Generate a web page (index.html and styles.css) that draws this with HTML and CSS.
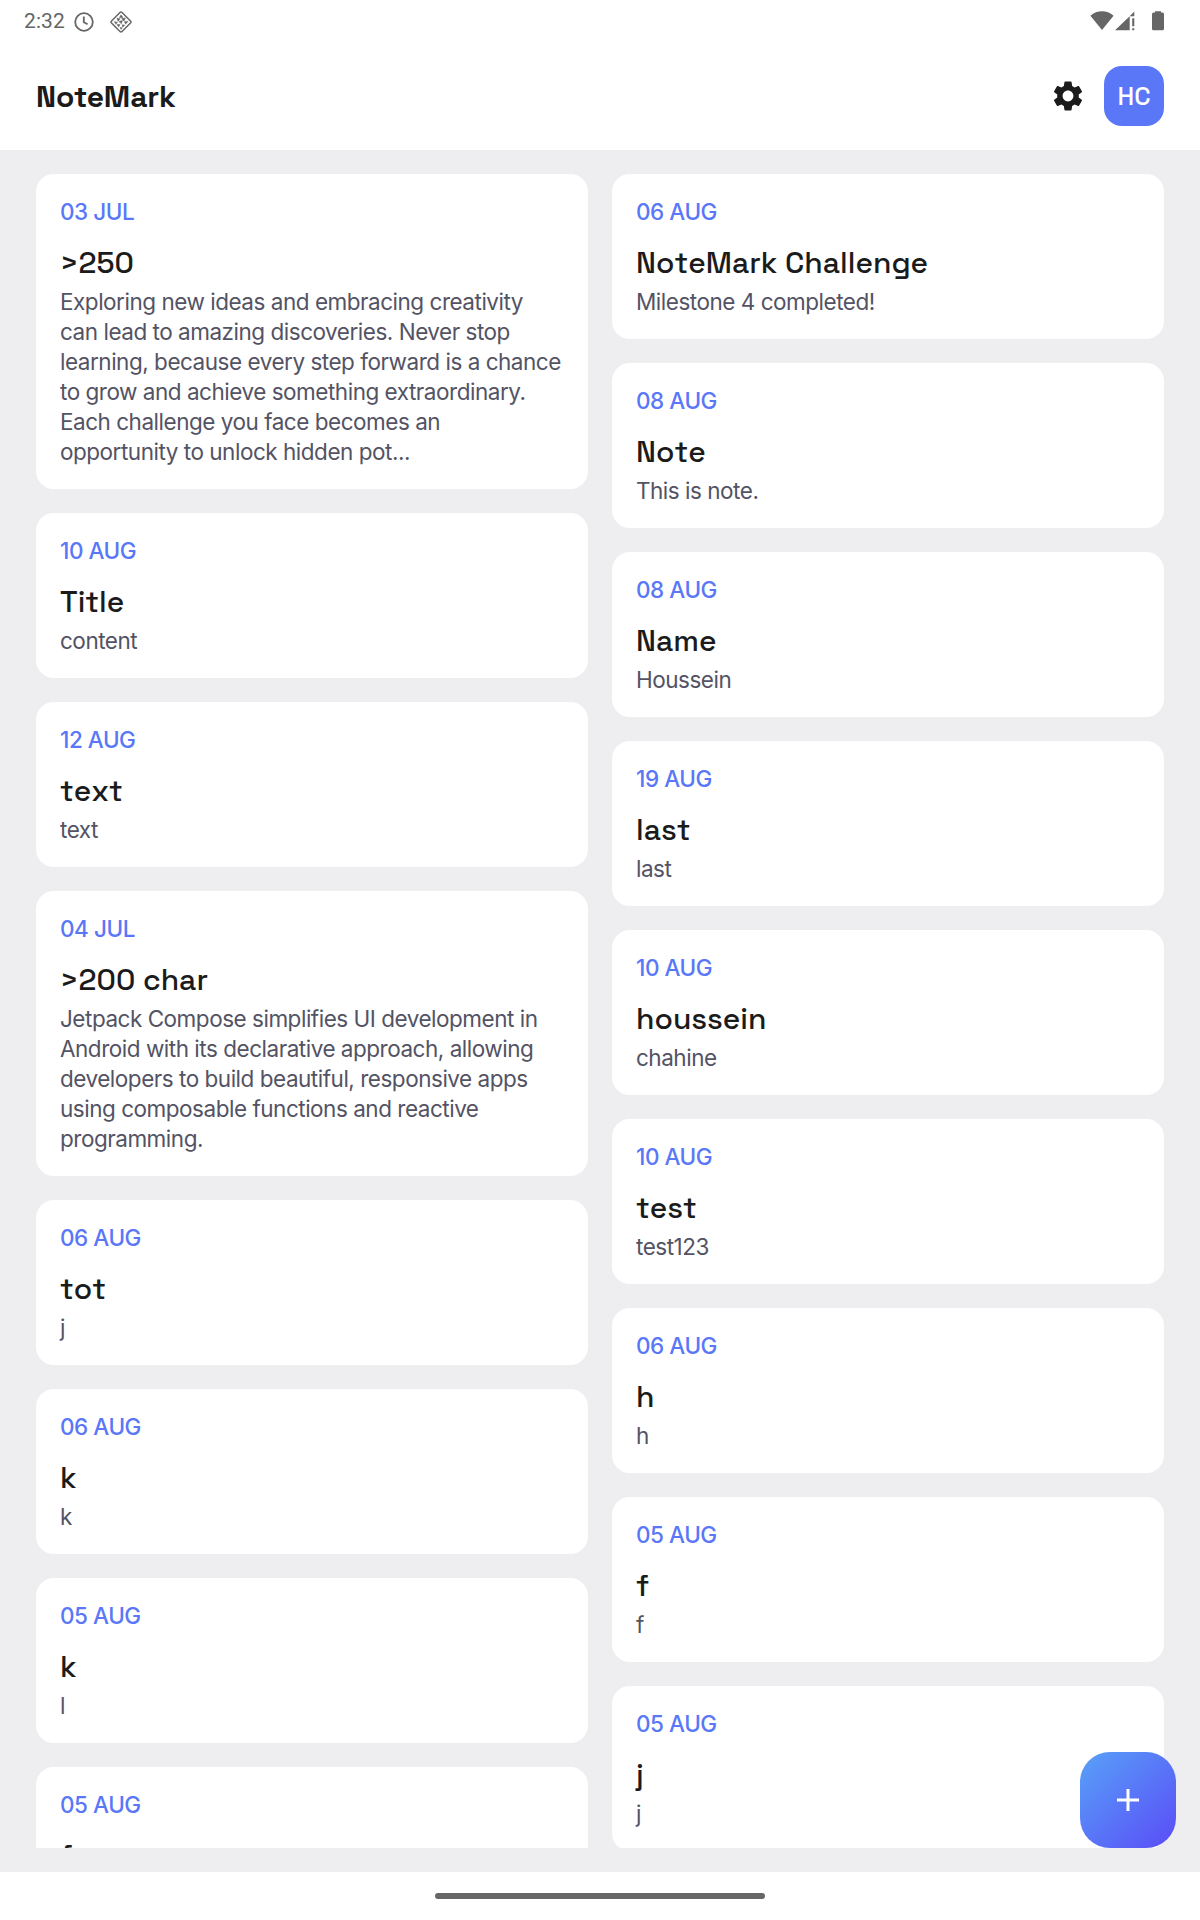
FILE: index.html
```html
<!DOCTYPE html>
<html lang="en">
<head>
<meta charset="utf-8">
<title>NoteMark</title>
<link rel="stylesheet" href="styles.css">
</head>
<body>
<div class="status-bar">
  <div class="status-group status-left">
    <span class="clock">2:32</span>
    <svg class="icon-clock" viewBox="0 0 20 20"><circle cx="10" cy="10" r="8.8"/><path d="M9.8 4.5V10.3L13.6 12.3"/></svg>
    <svg class="icon-diamond" viewBox="0 0 22 22"><path d="M10.2 1.3 1.3 10.2Q.7 11 1.3 11.8L10.2 20.7Q11 21.3 11.8 20.7L20.7 11.8Q21.3 11 20.7 10.2L11.8 1.3Q11 .7 10.2 1.3Z"/><path class="facets" d="M11 3.800 13 6.400 9.400 6.600zM7 7.200 10.200 7.800 8 10.400zM11.600 7.600 15.400 7 14 10.200zM4.400 10.600 7.400 11.400 5.800 13.200zM9 10.600 12.400 9.400 11.400 12.800zM14.600 10.600 18 10.400 15.400 13.200zM7 13.400 10 13.400 8.600 16zM12.200 13.800 14.800 14.200 12.600 16.200zM10 16.400 12.200 16.800 11 18.400z"/></svg>
  </div>
  <div class="status-group status-right">
    <svg class="icon-wifi" viewBox="0 0 24 20"><path d="M.4 4.700Q5.500.3 12 .3T23.600 4.700L12 19z"/></svg>
    <svg class="icon-signal" viewBox="0 0 20 20"><path d="M0 19.300 14.700 5.200V19.300zM19.300.5V5.200H14.700zM17.200 7.300H19.300V15.300H17.200zM17.200 17.200H19.300V19.300H17.200z"/></svg>
    <svg class="icon-battery" viewBox="0 0 12 20"><path d="M3 .3H9V1.500H10.500Q12 1.500 12 3V17.700Q12 19.200 10.500 19.200H1.500Q0 19.200 0 17.700V3Q0 1.500 1.500 1.500H3z"/></svg>
  </div>
</div>
<header class="app-bar">
  <h1 class="app-title">NoteMark</h1>
  <svg class="icon-settings" viewBox="0 0 24 24"><path d="M19.140 12.940c.04-.3.060-.61.060-.94 0-.32-.02-.64-.07-.94l2.030-1.580c.18-.14.230-.41.120-.61l-1.920-3.320c-.12-.22-.37-.29-.59-.22l-2.390.96c-.5-.38-1.030-.7-1.620-.94l-.36-2.540c-.04-.24-.24-.41-.48-.41h-3.840c-.24 0-.43.17-.47.41l-.36 2.540c-.59.24-1.130.57-1.620.94l-2.390-.96c-.22-.08-.47 0-.59.22L2.740 8.870c-.12.21-.08.47.120.61l2.030 1.580c-.05.3-.09.63-.09.94s.02.64.070.94l-2.030 1.580c-.18.14-.23.41-.12.61l1.920 3.320c.12.22.37.29.59.22l2.390-.96c.5.380 1.030.7 1.620.94l.36 2.540c.05.24.24.41.48.41h3.840c.24 0 .44-.17.470-.41l.36-2.540c.59-.24 1.130-.56 1.620-.94l2.390.96c.22.080.47 0 .59-.22l1.920-3.320c.12-.22.070-.47-.12-.61l-2.010-1.580zM12 15.600c-1.980 0-3.600-1.620-3.600-3.600s1.620-3.600 3.600-3.600 3.600 1.620 3.600 3.600-1.620 3.600-3.600 3.600z"/></svg>
  <div class="avatar">HC</div>
</header>
<main class="content">
  <div class="notes">
    <div class="column">
      <article class="note"><time>03 JUL</time><h2>&gt;250</h2><p>Exploring new ideas and embracing creativity can lead to amazing discoveries. Never stop learning, because every step forward is a chance to grow and achieve something extraordinary. Each challenge you face becomes an opportunity to unlock hidden pot...</p></article>
      <article class="note"><time>10 AUG</time><h2>Title</h2><p>content</p></article>
      <article class="note"><time>12 AUG</time><h2>text</h2><p>text</p></article>
      <article class="note"><time>04 JUL</time><h2>&gt;200 char</h2><p>Jetpack Compose simplifies UI development in Android with its declarative approach, allowing developers to build beautiful, responsive apps using composable functions and reactive programming.</p></article>
      <article class="note"><time>06 AUG</time><h2>tot</h2><p>j</p></article>
      <article class="note"><time>06 AUG</time><h2>k</h2><p>k</p></article>
      <article class="note"><time>05 AUG</time><h2>k</h2><p>l</p></article>
      <article class="note"><time>05 AUG</time><h2>f</h2></article>
    </div>
    <div class="column">
      <article class="note"><time>06 AUG</time><h2>NoteMark Challenge</h2><p>Milestone 4 completed!</p></article>
      <article class="note"><time>08 AUG</time><h2>Note</h2><p>This is note.</p></article>
      <article class="note"><time>08 AUG</time><h2>Name</h2><p>Houssein</p></article>
      <article class="note"><time>19 AUG</time><h2>last</h2><p>last</p></article>
      <article class="note"><time>10 AUG</time><h2>houssein</h2><p>chahine</p></article>
      <article class="note"><time>10 AUG</time><h2>test</h2><p>test123</p></article>
      <article class="note"><time>06 AUG</time><h2>h</h2><p>h</p></article>
      <article class="note"><time>05 AUG</time><h2>f</h2><p>f</p></article>
      <article class="note"><time>05 AUG</time><h2>j</h2><p>j</p></article>
    </div>
  </div>
  <button class="fab" aria-label="Add note"><svg viewBox="0 0 22 22"><path d="M11 0V22M0 11H22"/></svg></button>
</main>
<footer class="nav-bar"><div class="handle"></div></footer>
</body>
</html>
```
FILE: styles.css
```css
* { box-sizing: border-box; }
body {
  margin: 0;
  width: 1200px;
  height: 1920px;
  display: flex;
  flex-direction: column;
  overflow: hidden;
  background: #fff;
  font-family: Inter, sans-serif;
  color: #1b1b1c;
}
.status-bar {
  height: 42px;
  padding: 0 36px 0 24px;
  display: flex;
  justify-content: space-between;
  color: #666;
}
.status-group { display: flex; align-items: center; }
.status-group svg { fill: #666; }
.clock { font: 400 21px/42px Roboto, sans-serif; letter-spacing: .1px; }
.status-group .icon-clock { width: 20px; height: 20px; margin: 2px 0 0 9px; fill: none; stroke: #666; stroke-width: 1.8; }
.status-group .icon-diamond { width: 22px; height: 22px; margin: 2px 0 0 16px; fill: none; stroke: #666; stroke-width: 1.5; }
.facets { fill: #666; stroke-width: .5; }
.icon-wifi { width: 24px; height: 20px; }
.icon-signal { width: 20px; height: 20px; margin-left: 1px; }
.icon-battery { width: 12px; height: 20px; margin-left: 17px; }
.app-bar {
  height: 108px;
  padding: 0 36px;
  display: flex;
  align-items: center;
}
.app-title {
  margin: 0 auto 0 0;
  padding-top: 1px;
  font: 700 30px/36px "Space Grotesk", Inter, sans-serif;
  letter-spacing: -.15px;
}
.icon-settings { width: 36px; height: 36px; margin-right: 18px; fill: #1b1b1c; }
.avatar {
  width: 60px;
  height: 60px;
  border-radius: 18px;
  background: #5977f7;
  color: #fff;
  font: 500 25.500px/60px "Space Grotesk", Inter, sans-serif;
  text-align: center;
}
.content {
  position: relative;
  height: 1722px;
  padding: 24px 36px;
  background: #eeeef0;
}
.notes { height: 1674px; display: flex; gap: 24px; overflow: hidden; }
.column { width: 552px; display: flex; flex-direction: column; gap: 24px; }
.note { flex: none; padding: 24px 24px 22px; border-radius: 18px; background: #fff; }
.note time {
  display: block;
  height: 45px;
  font-size: 22.500px;
  font-weight: 500;
  letter-spacing: -.45px;
  line-height: 28px;
  color: #5977f7;
}
.note h2 {
  margin: 0;
  height: 44px;
  font: 500 30px/40px "Space Grotesk", Inter, sans-serif;
  font-kerning: none;
}
.note p {
  margin: 0;
  padding-right: 2px;
  font-size: 22.500px;
  letter-spacing: -.48px;
  line-height: 30px;
  color: #535364;
}
.fab {
  position: absolute;
  right: 24px;
  bottom: 24px;
  width: 96px;
  height: 96px;
  padding: 0;
  border: 0;
  border-radius: 30px;
  background: linear-gradient(135deg, #58a1f8 0%, #5a4cf7 100%);
  display: grid;
  place-items: center;
}
.fab svg { width: 22px; height: 22px; fill: none; stroke: #fff; stroke-width: 3; }
.nav-bar { height: 48px; display: grid; place-items: center; }
.handle { width: 330px; height: 6px; border-radius: 3px; background: #666; }
```
